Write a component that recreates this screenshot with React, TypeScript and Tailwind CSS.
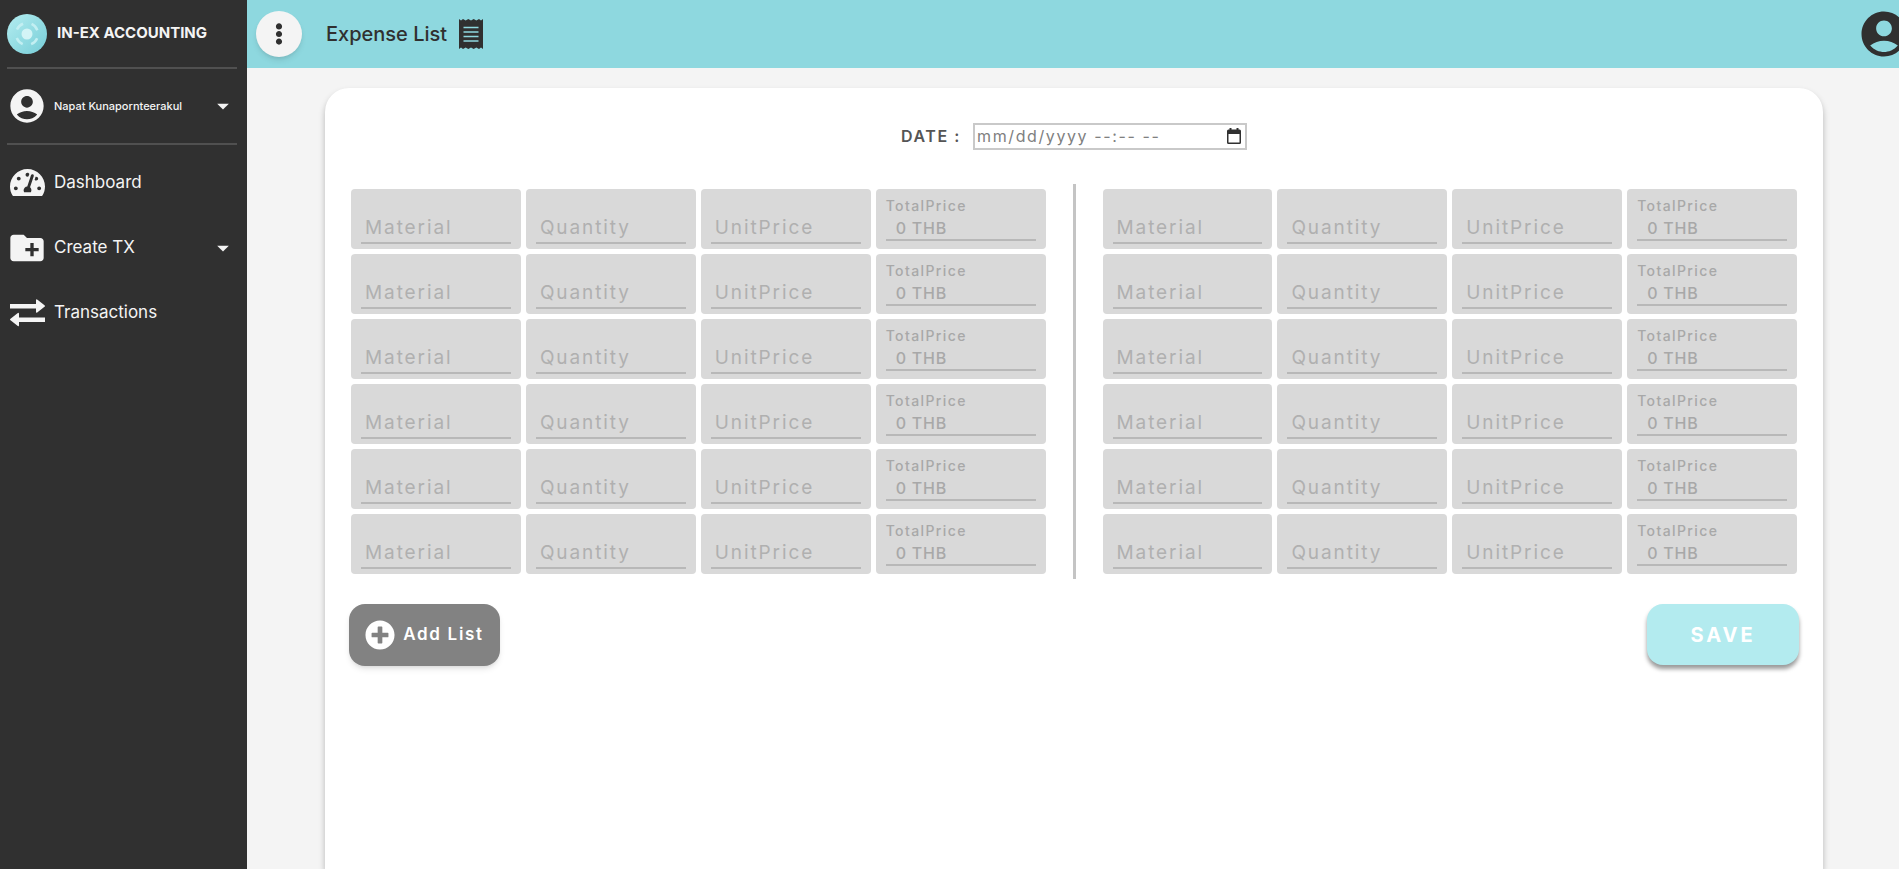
import { useId } from 'react';
import { FaTachometerAlt, FaPlusCircle, FaEllipsisV } from 'react-icons/fa';
import { MdAccountCircle, MdCreateNewFolder, MdArrowDropDown } from 'react-icons/md';

const ROWS = [1, 2, 3, 4, 5, 6];
const FIELDS = ['Material', 'Quantity', 'UnitPrice'];

function Logo() {
  return (
    <svg viewBox="0 0 40 40" className="size-10 shrink-0" aria-hidden="true">
      <defs>
        <linearGradient id="logo" x1="0" y1="0" x2="1" y2="1">
          <stop offset="0" stopColor="#b4edf0" />
          <stop offset="1" stopColor="#76cdd7" />
        </linearGradient>
      </defs>
      <circle cx="20" cy="20" r="20" fill="url(#logo)" />
      <circle cx="20" cy="20" r="5.500" fill="#d3f4f6" />
      <circle cx="20" cy="20" r="11" fill="none" stroke="#c3eff2" strokeWidth="2.500" strokeDasharray="8.640 8.640" strokeDashoffset="-4.320" />
    </svg>
  );
}

function Receipt() {
  return (
    <svg viewBox="0 0 24 30" className="ml-3 h-[30px] w-6 shrink-0" aria-hidden="true">
      <path
        fill="currentColor"
        d="M0 0l2 1.500L4 0l2.700 1.500L9.300 0 12 1.500 14.700 0l2.600 1.500L20 0l2 1.500L24 0v30l-2-1.500-2 1.500-2.700-1.500-2.600 1.500-2.700-1.500L9.300 30l-2.600-1.500L4 30l-2-1.500L0 30z"
      />
      <path stroke="#8ed8df" strokeWidth="1.600" d="M4.500 8.500h15M4.500 13h15M4.500 17.500h15M4.500 22h15" />
    </svg>
  );
}

function SwapArrows() {
  return (
    <svg viewBox="0 0 35 28" className="h-7 w-[35px] shrink-0" fill="currentColor" aria-hidden="true">
      <path d="M0 5h26V1.500q0-2 1.500-.7l7 5.400q1 .8 0 1.600l-7 5.400q-1.500 1.300-1.500-.7V9.500H0z" />
      <path d="M35 18.500H9V15q0-2-1.500-.7l-7 5.400q-1 .8 0 1.600l7 5.400Q9 28 9 26v-3h26z" />
    </svg>
  );
}

function Entry({ name }: { name: string }) {
  const id = useId();
  return (
    <div className="grid h-[60px] min-w-0 items-end rounded bg-[#d9d9d9] px-2.5 pb-[5px] text-[19px] tracking-widest">
      <input
        id={id}
        type="text"
        placeholder=" "
        className="peer col-start-1 row-start-1 h-8 w-full border-b-2 border-[#b8b8b8] bg-transparent px-1 text-[#555] outline-none"
      />
      <label htmlFor={id} className="invisible col-start-1 row-start-1 h-8 cursor-text px-1 leading-8 text-[#b0b0b0] peer-placeholder-shown:visible">
        {name}
      </label>
    </div>
  );
}

function Total() {
  return (
    <div className="flex h-[60px] min-w-0 flex-col rounded bg-[#d9d9d9] px-2.5 pt-[9px] text-[#a8a8a8]">
      <span className="text-sm leading-4 font-medium tracking-widest">TotalPrice</span>
      <output className="h-[27px] border-b-2 border-[#b8b8b8] px-2.5 text-base leading-7 font-medium tracking-wider">0 THB</output>
    </div>
  );
}

function Entries() {
  return (
    <div className="grid grid-cols-4 gap-[5px] py-[5px]">
      {ROWS.map((row) => [
        ...FIELDS.map((name) => <Entry key={`${row}-${name}`} name={name} />),
        <Total key={`${row}-total`} />,
      ])}
    </div>
  );
}

export default function App() {
  return (
    <div className="flex min-h-screen overflow-hidden bg-[#f4f4f4] font-[Inter,sans-serif]">
      <aside className="flex w-[247px] shrink-0 flex-col bg-[#303030] pr-2.5 pl-[7px] text-[#f4f4f4]">
        <div className="flex h-[69px] items-center gap-2.5 border-b-2 border-[#505050]">
          <Logo />
          <span className="text-[15px] font-bold whitespace-nowrap">IN-EX ACCOUNTING</span>
        </div>
        <button type="button" className="flex h-[76px] items-center gap-[7px] border-b-2 border-[#505050] text-left">
          <MdAccountCircle className="size-10 shrink-0" />
          <span className="grow text-[11px] font-medium">Napat Kunapornteerakul</span>
          <MdArrowDropDown className="size-7 shrink-0" />
        </button>
        <nav className="flex flex-col pt-[5px] text-[17px]">
          <a href="#dashboard" className="flex h-[65px] items-center gap-[9px] pl-[3px]">
            <FaTachometerAlt className="size-[35px]" />
            Dashboard
          </a>
          <button type="button" className="flex h-[65px] items-center gap-[7px] text-left">
            <MdCreateNewFolder className="size-10" />
            <span className="grow">Create TX</span>
            <MdArrowDropDown className="size-7" />
          </button>
          <a href="#transactions" className="flex h-[65px] items-center gap-[9px] pl-[3px]">
            <SwapArrows />
            Transactions
          </a>
        </nav>
      </aside>
      <div className="flex min-w-0 grow flex-col">
        <header className="flex h-[68px] items-center bg-[#8ed8df] pl-[9px] text-[#303030]">
          <button type="button" aria-label="Menu" className="flex size-[46px] items-center justify-center rounded-full bg-[#f4f4f4] shadow-md">
            <FaEllipsisV className="size-[22px]" />
          </button>
          <h1 className="ml-6 text-xl font-medium">Expense List</h1>
          <Receipt />
          <button type="button" aria-label="Account" className="-mr-3 ml-auto">
            <MdAccountCircle className="size-[54px]" />
          </button>
        </header>
        <main className="flex grow pt-5 pr-[76px] pl-[78px]">
          <form className="grow rounded-t-3xl bg-white px-6 pt-8 shadow-[0_4px_6px_rgba(0,0,0,0.25)]">
            <div className="flex h-8 items-center justify-center gap-3">
              <label htmlFor="date" className="text-base font-semibold tracking-widest text-[#555]">DATE :</label>
              <div className="flex h-[27px] w-[274px] items-center border-2 border-[#c9c9c9] pr-1 pl-0.5">
                <input
                  id="date"
                  type="text"
                  placeholder="mm/dd/yyyy --:-- --"
                  className="min-w-0 grow text-base tracking-widest text-[#555] outline-none placeholder:text-[#808080]"
                />
                <button type="button" aria-label="Pick a date" className="text-[#303030]">
                  <svg viewBox="0 0 14 16" className="h-4 w-3.5" aria-hidden="true">
                    <path fill="currentColor" d="M1.500 1.500h1V0h2v1.500h5V0h2v1.500h1Q14 1.500 14 3v11.500q0 1.500-1.500 1.500h-11Q0 16 0 14.500V3q0-1.500 1.500-1.500zM1.500 6v8.500h11V6z" />
                  </svg>
                </button>
              </div>
            </div>
            <div className="mt-8 grid grid-cols-[1fr_auto_1fr] gap-[27px] px-0.5">
              <Entries />
              <div className="w-[3px] bg-[#c4c4c4]" />
              <Entries />
            </div>
            <div className="mt-[25px] flex justify-between">
              <button type="button" className="flex h-[62px] w-[151px] items-center justify-center gap-2 rounded-2xl bg-[#828282] text-[17px] font-semibold tracking-widest whitespace-nowrap text-white shadow-md">
                <FaPlusCircle className="size-[30px]" />
                Add List
              </button>
              <button type="submit" className="h-[61px] w-[152px] rounded-2xl bg-[#b3ebef] text-xl font-bold tracking-[0.15em] text-white shadow-[0_4px_4px_rgba(0,0,0,0.4)]">SAVE</button>
            </div>
          </form>
        </main>
      </div>
    </div>
  );
}
